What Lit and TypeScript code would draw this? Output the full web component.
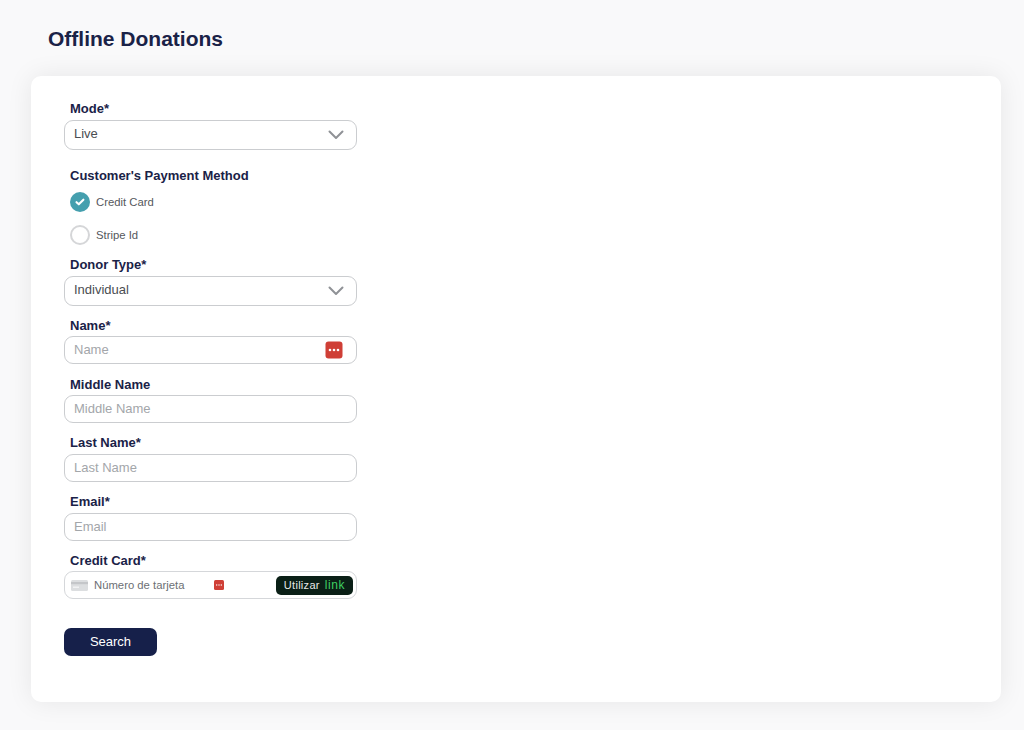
import { LitElement, html, css } from "lit";
import { customElement } from "lit/decorators.js";

const chevron = html`<svg class="chev" width="16" height="10" viewBox="0 0 16 10" fill="none"><path d="M1.5 1.5 L8 8 L14.5 1.5" stroke="#8f9296" stroke-width="2" stroke-linecap="round" stroke-linejoin="round"/></svg>`;

@customElement("app-root")
export class AppRoot extends LitElement {
  static styles = css`
    :host { display: block; width: 1024px; height: 730px; overflow: hidden; background: #f9f9fa; font-family: "Liberation Sans", Arial, sans-serif; color: #1a2247; }
    .page { padding: 25px 23px 0 31px; display: flex; flex-direction: column; gap: 24px; }
    h1 { margin: 0 0 0 17px; font-size: 21px; line-height: 27px; font-weight: 700; color: #1a2247; }
    .card { height: 626px; box-sizing: border-box; background: #fff; border-radius: 10px; box-shadow: 0 0 26px rgba(0,0,0,.08); padding: 24px 33px; display: flex; flex-direction: column; }
    .form { width: 293px; display: flex; flex-direction: column; }
    .field { display: flex; flex-direction: column; }
    label, .lbl { margin-left: 6px; margin-bottom: -2px; font-size: 13px; line-height: 18px; font-weight: 700; color: #1a2247; }
    .tight label { margin-bottom: 0; line-height: 16px; }
    .ctl { box-sizing: border-box; display: flex; align-items: center; border: 1px solid #cbcdd0; border-radius: 9px; background: #fff; padding: 0 9px; font-size: 13px; color: #4a4d52; }
    .ctl > span:first-child { padding-bottom: 2px; }
    .sel { height: 30px; margin-top: 3.5px; justify-content: space-between; padding-right: 12px; }
    .inp { height: 28px; margin-top: 3px; justify-content: space-between; color: #a3a6aa; }
    .m1 { margin-top: 17.5px; }
    .m2 { margin-top: 12px; }
    .m3 { margin-top: 11px; }
    .m4 { margin-top: 11.5px; }
    .radios { display: flex; flex-direction: column; gap: 13px; margin-top: 9px; margin-left: 6px; }
    .radio { display: flex; align-items: center; gap: 6px; font-size: 11.3px; color: #55585d; height: 20px; }
    .dot { width: 20px; height: 20px; box-sizing: border-box; border-radius: 50%; display: flex; align-items: center; justify-content: center; }
    .dot.on { background: #459fae; }
    .dot.off { border: 2px solid #d5d6d8; background: #fff; }
    .pm { display: block; margin-right: 4px; }
    .cc { height: 28px; margin-top: 2px; padding: 0 3px 0 6px; border-color: #d5d7da; font-size: 11.3px; color: #6c6f74; }
    .cc .num { margin-left: 6px; width: 120px; }
    .mini { display: block; }
    .link { margin-left: auto; box-sizing: border-box; width: 77px; height: 19px; border-radius: 5px; background: #0a1f16; color: #e6e9e7; font-size: 11px; display: flex; align-items: baseline; justify-content: center; gap: 5px; letter-spacing: .3px; line-height: 19px; }
    .link b { color: #3fcf63; font-weight: 400; font-size: 12px; letter-spacing: .6px; }
    button { margin-top: 29px; width: 93px; height: 28px; border: 0; border-radius: 7px; background: #16204a; color: #fff; font: 13px "Liberation Sans", Arial, sans-serif; padding: 0 0 2px; }
  `;

  render() {
    return html`<div class="page">
      <h1>Offline Donations</h1>
      <div class="card">
        <div class="form">
          <div class="field">
            <label>Mode*</label>
            <div class="ctl sel"><span>Live</span>${chevron}</div>
          </div>
          <div class="field m1">
            <div class="lbl">Customer's Payment Method</div>
            <div class="radios">
              <div class="radio"><span class="dot on"><svg width="10" height="8" viewBox="0 0 10 8" fill="none"><path d="M1.5 4.2 L3.8 6.3 L8.4 1.7" stroke="#fff" stroke-width="2.1" stroke-linecap="round" stroke-linejoin="round"/></svg></span>Credit Card</div>
              <div class="radio"><span class="dot off"></span>Stripe Id</div>
            </div>
          </div>
          <div class="field m3">
            <label>Donor Type*</label>
            <div class="ctl sel"><span>Individual</span>${chevron}</div>
          </div>
          <div class="field m4">
            <label>Name*</label>
            <div class="ctl inp"><span>Name</span>
              <svg class="pm" width="18" height="18" viewBox="0 0 18 18"><rect x="0.5" y="0.5" width="17" height="17" rx="3" fill="#cf3f36"/><g fill="#fff"><circle cx="5" cy="9" r="1.3"/><circle cx="9" cy="9" r="1.3"/><circle cx="13" cy="9" r="1.3"/></g></svg>
            </div>
          </div>
          <div class="field m2">
            <label>Middle Name</label>
            <div class="ctl inp"><span>Middle Name</span></div>
          </div>
          <div class="field m2 tight">
            <label>Last Name*</label>
            <div class="ctl inp"><span>Last Name</span></div>
          </div>
          <div class="field m2 tight">
            <label>Email*</label>
            <div class="ctl inp"><span>Email</span></div>
          </div>
          <div class="field m2 tight">
            <label>Credit Card*</label>
            <div class="ctl cc">
              <svg class="mini" width="17" height="11" viewBox="0 0 17 11"><rect width="17" height="11" rx="1.5" fill="#dcdee0"/><rect y="2" width="17" height="2.2" fill="#c4c6c9"/><rect x="2" y="6.5" width="6" height="1.5" fill="#f1f2f3"/></svg>
              <span class="num">Número de tarjeta</span>
              <svg class="mini" width="10" height="10" viewBox="0 0 10 10"><rect width="10" height="10" rx="1.5" fill="#cf3f36"/><g fill="#fff"><circle cx="2.7" cy="5" r=".7"/><circle cx="5" cy="5" r=".7"/><circle cx="7.3" cy="5" r=".7"/></g></svg>
              <span class="link">Utilizar <b>link</b></span>
            </div>
          </div>
          <button>Search</button>
        </div>
      </div>
    </div>`;
  }
}
